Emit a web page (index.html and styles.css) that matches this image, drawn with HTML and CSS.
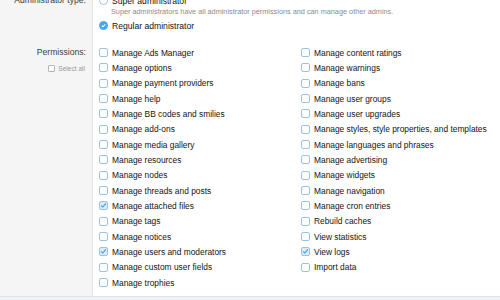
FILE: index.html
```html
<!DOCTYPE html>
<html lang="en">
    <head>
        <meta charset="UTF-8">
        <title>Admin permissions</title>
        <link rel="stylesheet" href="styles.css">
    </head>
    <body>

        <div class="form">
            <!-- administrator type -->
            <div class="row row-type">
                <div class="label">Administrator type:</div>
                <div class="input">
                    <div class="radio"><span class="dot"></span>Super administrator</div>
                    <div class="hint">Super administrators have all administrator permissions and can manage other admins.</div>
                    <div class="radio"><span class="dot on"><svg viewBox="0 0 10 10"><path d="M2.6 5.2 L4.3 6.8 L7.4 3.4" /></svg></span>Regular administrator</div>
                </div>
            </div>

            <!-- permissions -->
            <div class="row row-perms">
                <div class="label">
                    Permissions:
                    <div class="select-all"><span class="box small"></span>Select all</div>
                </div>
                <div class="input">
                    <div class="perms">
                        <div class="perm"><span class="box"></span>Manage Ads Manager</div>
                        <div class="perm"><span class="box"></span>Manage options</div>
                        <div class="perm"><span class="box"></span>Manage payment providers</div>
                        <div class="perm"><span class="box"></span>Manage help</div>
                        <div class="perm"><span class="box"></span>Manage BB codes and smilies</div>
                        <div class="perm"><span class="box"></span>Manage add-ons</div>
                        <div class="perm"><span class="box"></span>Manage media gallery</div>
                        <div class="perm"><span class="box"></span>Manage resources</div>
                        <div class="perm"><span class="box"></span>Manage nodes</div>
                        <div class="perm"><span class="box"></span>Manage threads and posts</div>
                        <div class="perm"><span class="box on"><svg viewBox="0 0 10 10"><path d="M1.8 5 L4 7.2 L8.4 2" /></svg></span>Manage attached files</div>
                        <div class="perm"><span class="box"></span>Manage tags</div>
                        <div class="perm"><span class="box"></span>Manage notices</div>
                        <div class="perm"><span class="box on"><svg viewBox="0 0 10 10"><path d="M1.8 5 L4 7.2 L8.4 2" /></svg></span>Manage users and moderators</div>
                        <div class="perm"><span class="box"></span>Manage custom user fields</div>
                        <div class="perm"><span class="box"></span>Manage trophies</div>

                        <div class="perm"><span class="box"></span>Manage content ratings</div>
                        <div class="perm"><span class="box"></span>Manage warnings</div>
                        <div class="perm"><span class="box"></span>Manage bans</div>
                        <div class="perm"><span class="box"></span>Manage user groups</div>
                        <div class="perm"><span class="box"></span>Manage user upgrades</div>
                        <div class="perm"><span class="box"></span>Manage styles, style properties, and templates</div>
                        <div class="perm"><span class="box"></span>Manage languages and phrases</div>
                        <div class="perm"><span class="box"></span>Manage advertising</div>
                        <div class="perm"><span class="box"></span>Manage widgets</div>
                        <div class="perm"><span class="box"></span>Manage navigation</div>
                        <div class="perm"><span class="box"></span>Manage cron entries</div>
                        <div class="perm"><span class="box"></span>Rebuild caches</div>
                        <div class="perm"><span class="box"></span>View statistics</div>
                        <div class="perm"><span class="box on"><svg viewBox="0 0 10 10"><path d="M1.8 5 L4 7.2 L8.4 2" /></svg></span>View logs</div>
                        <div class="perm"><span class="box"></span>Import data</div>
                    </div>
                </div>
            </div>
        </div>
        <div class="footer"></div>

    </body>
</html>
```

FILE: styles.css
```css
body {
    margin: 0;
    font-family: "Liberation Sans", Arial, sans-serif;
    font-size: 8.4px;
    color: #141414;
    background-color: #fff;
    overflow: hidden;
}

.form {
    margin-top: -7px;
    height: 304px;
    display: flex;
    flex-direction: column;
    background: linear-gradient(to right, #f5f5f5 0, #f5f5f5 92px, #e6e6e6 92px, #e6e6e6 93px, #fff 93px);
}

.row {
    display: flex;
}

.label {
    width: 86px;
    flex-shrink: 0;
    padding-right: 7px;
    text-align: right;
    color: #404040;
    font-size: 8.6px;
}

.input {
    padding-left: 6px;
}

.row-type .label {
    line-height: 14px;
}

.radio {
    display: flex;
    align-items: center;
    height: 15px;
    font-size: 8.6px;
}

.dot {
    display: inline-flex;
    width: 7px;
    height: 7px;
    border: 1px solid #9cc2e2;
    border-radius: 50%;
    margin-right: 4px;
    background-color: #fff;
}

.dot.on {
    background-color: #47a7eb;
    border-color: #47a7eb;
}

.dot svg, .box svg {
    width: 100%;
    height: 100%;
}

.dot svg path {
    fill: none;
    stroke: #fff;
    stroke-width: 1.5;
}

.hint {
    color: #8c8c8c;
    font-size: 7.3px;
    margin-left: 12px;
    line-height: 8px;
    margin-bottom: 2px;
}

.row-perms {
    margin-top: 12px;
}

.row-perms .label {
    line-height: 15.3px;
}

.select-all {
    display: flex;
    align-items: center;
    justify-content: flex-end;
    margin-top: 1px;
    margin-right: 1px;
    color: #9a9a9a;
    font-size: 6.6px;
}

.perms {
    display: grid;
    grid-template-rows: repeat(16, 15.33px);
    grid-template-columns: 202px auto;
    grid-auto-flow: column;
}

.perm {
    display: flex;
    align-items: center;
}

.box {
    display: inline-flex;
    width: 7px;
    height: 7px;
    border: 1px solid #9cc2e2;
    border-radius: 2px;
    margin-right: 4px;
    background-color: #fff;
}

.box.small {
    width: 5px;
    height: 5px;
    border-color: #b5b5b5;
    border-radius: 1px;
    margin-right: 3px;
}

.box.on {
    background-color: #dcebf8;
}

.box svg path {
    fill: none;
    stroke: #3c9be6;
    stroke-width: 1.6;
}

.footer {
    position: absolute;
    left: 0;
    right: 0;
    top: 296px;
    height: 4px;
    border-top: 1px solid #dde3ea;
    background-color: #eef2f7;
}
```
